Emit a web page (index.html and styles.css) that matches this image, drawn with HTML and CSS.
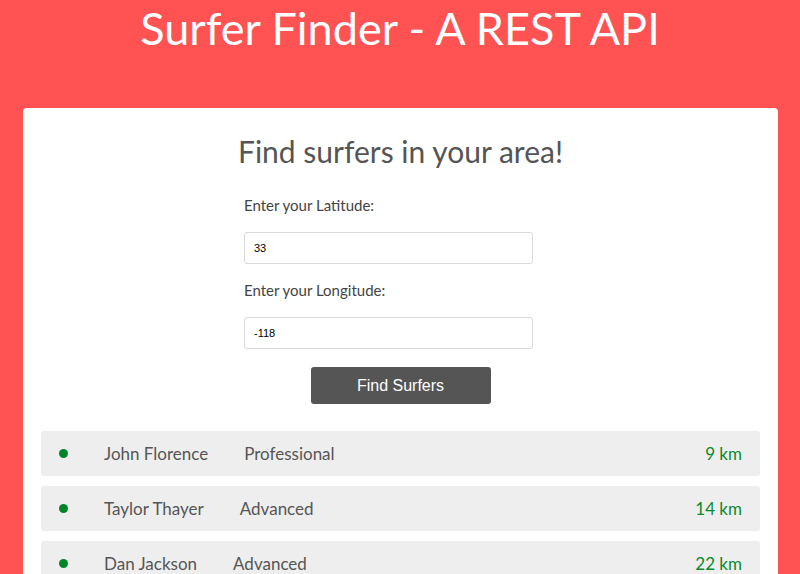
FILE: index.html
```html
<!DOCTYPE html>
<html lang="en">
<head>
<meta charset="utf-8">
<title>Surfer Finder - A REST API</title>
<link rel="stylesheet" href="styles.css">
</head>
<body>
<h1 class="title">Surfer Finder - A REST API</h1>
<main class="card">
  <h2 class="heading">Find surfers in your area!</h2>
  <form class="form">
    <label class="label" for="lat">Enter your Latitude:</label>
    <input class="input" id="lat" type="text" value="33">
    <label class="label" for="lng">Enter your Longitude:</label>
    <input class="input" id="lng" type="text" value="-118">
  </form>
  <div class="actions">
    <button class="button" type="button">Find Surfers</button>
  </div>
  <ul class="list">
    <li class="item"><span class="dot"></span><span class="name">John Florence</span><span class="rank">Professional</span><span class="dist">9 km</span></li>
    <li class="item"><span class="dot"></span><span class="name">Taylor Thayer</span><span class="rank">Advanced</span><span class="dist">14 km</span></li>
    <li class="item"><span class="dot"></span><span class="name">Dan Jackson</span><span class="rank">Advanced</span><span class="dist">22 km</span></li>
  </ul>
</main>
</body>
</html>
```
FILE: styles.css
```css
html, body {
  margin: 0;
  padding: 0;
}
body {
  background: #ff5252;
  font-family: Lato, "Open Sans", sans-serif;
  height: 574px;
  overflow: hidden;
}
.title {
  margin: 0;
  text-align: center;
  color: #fff;
  font-weight: 400;
  font-size: 45px;
  line-height: 56px;
}
.card {
  display: block;
  width: 755px;
  margin: 52px 0 0 23px;
  background: #fff;
  border-radius: 4px;
  padding: 25px 18px 20px;
  box-sizing: border-box;
}
.heading {
  margin: 0;
  text-align: center;
  color: #555;
  font-weight: 400;
  font-size: 30px;
  line-height: 36px;
}
.form {
  width: 289px;
  margin: 27px 0 0 203px;
  display: flex;
  flex-direction: column;
}
.label {
  color: #444;
  font-size: 15px;
  line-height: 18px;
  margin-bottom: 18px;
}
.input {
  height: 32px;
  box-sizing: border-box;
  border: 1px solid #d9d9d9;
  border-radius: 3px;
  padding: 0 9px;
  font-family: "Liberation Sans", Arial, sans-serif;
  font-size: 11px;
  color: #000;
  margin-bottom: 17px;
  outline: none;
}
.actions {
  display: flex;
  justify-content: center;
  margin-top: 1px;
}
.button {
  width: 180px;
  height: 37px;
  border: none;
  border-radius: 3px;
  background: #555;
  color: #fff;
  font-family: "Liberation Sans", Arial, sans-serif;
  font-size: 16px;
}
.list {
  list-style: none;
  margin: 27px 0 0;
  padding: 0;
  display: flex;
  flex-direction: column;
  gap: 10px;
}
.item {
  display: flex;
  align-items: center;
  height: 45px;
  background: #eee;
  border-radius: 3px;
  padding: 0 18px;
  color: #555;
  font-size: 17px;
}
.dot {
  width: 9px;
  height: 9px;
  border-radius: 50%;
  background: #02852a;
  margin-right: 36px;
}
.name {
  margin-right: 36px;
}
.dist {
  margin-left: auto;
  color: #0a8a2c;
}
```
